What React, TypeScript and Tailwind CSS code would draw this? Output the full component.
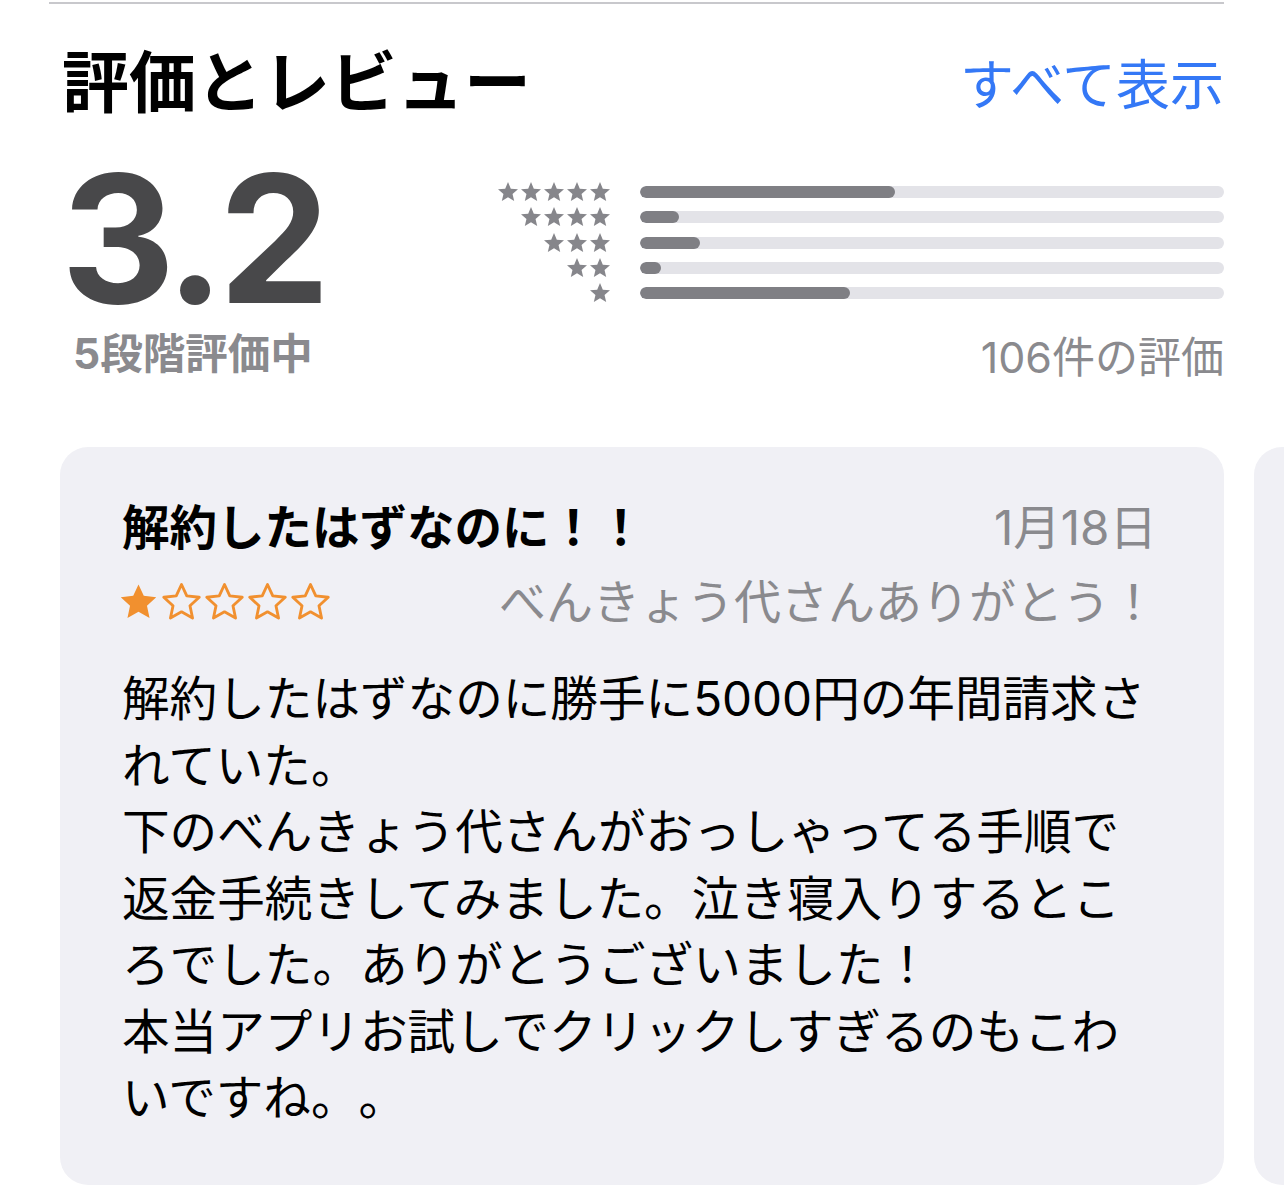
import React from "react";

const STAR_PATH =
  "M12 2.5l2.94 6.34 6.96.78-5.17 4.73 1.43 6.85L12 17.77 5.84 21.2l1.43-6.85L2.1 9.62l6.96-.78z";

// chunkier star used in the histogram legend
const SOLID_STAR_PATH =
  "M12 17.27L18.18 21l-1.64-7.03L22 9.24l-7.19-.61L12 2 9.19 8.63 2 9.24l5.46 4.73L5.82 21z";

const FONT = "font-['Inter','Noto_Sans_CJK_JP',sans-serif]";

type Bucket = { stars: number; share: number };

const buckets: Bucket[] = [
  { stars: 5, share: 43.6 },
  { stars: 4, share: 6.7 },
  { stars: 3, share: 10.3 },
  { stars: 2, share: 3.6 },
  { stars: 1, share: 35.9 },
];

const bodyLines = [
  "解約したはずなのに勝手に5000円の年間請求さ",
  "れていた。",
  "下のべんきょう代さんがおっしゃってる手順で",
  "返金手続きしてみました。泣き寝入りするとこ",
  "ろでした。ありがとうございました！",
  "本当アプリお試しでクリックしすぎるのもこわ",
  "いですね。。",
];

function GrayStar() {
  return (
    <svg viewBox="0 0 24 24" className="-mx-[0.5px] size-[24px] shrink-0" fill="#86868b">
      <path d={SOLID_STAR_PATH} />
    </svg>
  );
}

function OrangeStar({ filled }: { filled: boolean }) {
  return (
    <svg
      viewBox="0 0 24 24"
      className="size-[43px] shrink-0"
      fill={filled ? "#f1902f" : "none"}
      stroke="#f1902f"
      strokeWidth={filled ? 0 : 1.6}
      strokeLinejoin="round"
    >
      <path d={STAR_PATH} />
    </svg>
  );
}

function Histogram() {
  return (
    <div className="flex flex-col gap-[13.3px]">
      {buckets.map((b) => (
        <div key={b.stars} className="flex h-[12px] items-center">
          <div className="flex w-[121px] justify-end">
            {Array.from({ length: b.stars }).map((_, i) => (
              <GrayStar key={i} />
            ))}
          </div>
          <div className="ml-[29px] h-[12px] flex-1 overflow-hidden rounded-full bg-[#e3e3e8]">
            <div
              className="h-full rounded-full bg-[#7f7f84]"
              style={{ width: `${b.share}%` }}
            />
          </div>
        </div>
      ))}
    </div>
  );
}

function ReviewCard() {
  return (
    <div className="h-[738px] w-[1164px] shrink-0 rounded-[28px] bg-[#f0f0f5] pl-[62px] pr-[67px] pt-[53px]">
      <div className="flex h-[56px] items-center justify-between">
        <h3 className="text-[47.5px] font-bold leading-none text-black">
          解約したはずなのに！！
        </h3>
        <span className="text-[47.5px] leading-none text-[#8a8a8e]">1月18日</span>
      </div>
      <div className="mt-[21px] flex h-[48px] items-center justify-between">
        <div className="-ml-[5px] flex">
          {[0, 1, 2, 3, 4].map((i) => (
            <OrangeStar key={i} filled={i === 0} />
          ))}
        </div>
        <span className="text-[47px] leading-none text-[#8a8a8e]">
          べんきょう代さんありがとう！
        </span>
      </div>
      <div className="mt-[41px] text-[47.6px] leading-[66.5px] text-black">
        {bodyLines.map((line, i) => (
          <div key={i} className="whitespace-nowrap">
            {line}
          </div>
        ))}
      </div>
    </div>
  );
}

export default function App() {
  return (
    <div
      className={`min-h-[1198px] w-[1284px] overflow-hidden bg-white [text-spacing-trim:space-all] ${FONT}`}
    >
      <div className="ml-[49px] mr-[60px] mt-[2px] h-[2px] bg-[#c8c8cc]" />

      <div className="mt-[38px] flex items-center justify-between pl-[62px] pr-[60px]">
        <h2 className="text-[67px] font-bold leading-[82px] text-black">評価とレビュー</h2>
        <span className="mt-[6px] text-[54px] leading-none text-[#3478f6]">すべて表示</span>
      </div>

      <div className="mt-[24px] flex pl-[60px] pr-[60px]">
        <div className="flex flex-col">
          <div className="ml-[1px] mt-[21px] text-[177px] font-bold leading-[140px] tracking-[-6px] text-[#48484a]">
            3.2
          </div>
          <div className="ml-[13px] mt-[24px] text-[42.5px] font-bold leading-none text-[#8a8a8e]">
            5段階評価中
          </div>
        </div>
        <div className="ml-auto flex w-[734px] flex-col pt-[38px]">
          <Histogram />
          <div className="mt-[37px] self-end text-[43px] leading-none text-[#8a8a8e]">
            106件の評価
          </div>
        </div>
      </div>

      <div className="mt-[68px] flex gap-[30px] pl-[60px]">
        <ReviewCard />
        <div className="h-[738px] w-[300px] shrink-0 rounded-[28px] bg-[#f0f0f5]" />
      </div>
    </div>
  );
}
